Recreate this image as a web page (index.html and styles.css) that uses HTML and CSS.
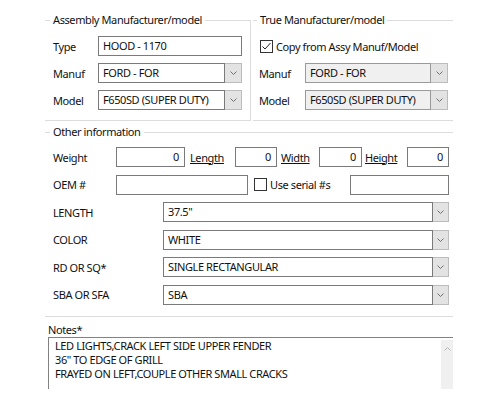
FILE: index.html
```html
<!DOCTYPE html>
<html>
<head>
<meta charset="utf-8">
<link rel="stylesheet" href="styles.css">
</head>
<body>
<div class="form">
  <div class="top">
    <fieldset class="grp grp-assy">
      <legend>Assembly Manufacturer/model</legend>
      <div class="rows">
        <div class="row"><span class="lbl">Type</span><div class="field w-top">HOOD - 1170</div></div>
        <div class="row"><span class="lbl">Manuf</span>
          <div class="combo w-top"><div class="val">FORD - FOR</div><div class="btn"><svg width="7" height="4" viewBox="0 0 7 4"><path d="M0.5 0.5 L3.5 3.5 L6.5 0.5" fill="none" stroke="#707070" stroke-width="1"/></svg></div></div>
        </div>
        <div class="row"><span class="lbl">Model</span>
          <div class="combo w-top"><div class="val">F650SD (SUPER DUTY)</div><div class="btn"><svg width="7" height="4" viewBox="0 0 7 4"><path d="M0.5 0.5 L3.5 3.5 L6.5 0.5" fill="none" stroke="#707070" stroke-width="1"/></svg></div></div>
        </div>
      </div>
    </fieldset>
    <fieldset class="grp grp-true">
      <legend>True Manufacturer/model</legend>
      <div class="rows">
        <div class="row"><span class="chk"><svg width="11" height="11" viewBox="0 0 11 11"><path d="M1.5 5.5 L4 8 L9.5 2" fill="none" stroke="#222" stroke-width="1"/></svg></span><span class="chk-text">Copy from Assy Manuf/Model</span></div>
        <div class="row"><span class="lbl lbl-r">Manuf</span>
          <div class="combo disabled w-topr"><div class="val">FORD - FOR</div><div class="btn"><svg width="7" height="4" viewBox="0 0 7 4"><path d="M0.5 0.5 L3.5 3.5 L6.5 0.5" fill="none" stroke="#707070" stroke-width="1"/></svg></div></div>
        </div>
        <div class="row"><span class="lbl lbl-r">Model</span>
          <div class="combo disabled w-topr"><div class="val">F650SD (SUPER DUTY)</div><div class="btn"><svg width="7" height="4" viewBox="0 0 7 4"><path d="M0.5 0.5 L3.5 3.5 L6.5 0.5" fill="none" stroke="#707070" stroke-width="1"/></svg></div></div>
        </div>
      </div>
    </fieldset>
  </div>

  <fieldset class="grp grp-other">
    <legend>Other information</legend>
    <div class="rows rows-other">
      <div class="row">
        <span class="lbl lbl-o">Weight</span>
        <div class="field num w-weight">0</div>
        <span class="link l-length">Length</span>
        <div class="field num w-dim">0</div>
        <span class="link l-width">Width</span>
        <div class="field num w-dim2">0</div>
        <span class="link l-height">Height</span>
        <div class="field num w-dim">0</div>
      </div>
      <div class="row">
        <span class="lbl lbl-o">OEM #</span>
        <div class="field w-oem"></div>
        <span class="chk chk-empty"></span><span class="chk-text">Use serial #s</span>
        <div class="field w-serial"></div>
      </div>
      <div class="row">
        <span class="lbl lbl-wide">LENGTH</span>
        <div class="combo w-long"><div class="val">37.5"</div><div class="btn btn-s"><svg width="7" height="4" viewBox="0 0 7 4"><path d="M0.5 0.5 L3.5 3.5 L6.5 0.5" fill="none" stroke="#707070" stroke-width="1"/></svg></div></div>
      </div>
      <div class="row">
        <span class="lbl lbl-wide">COLOR</span>
        <div class="combo w-long"><div class="val">WHITE</div><div class="btn btn-s"><svg width="7" height="4" viewBox="0 0 7 4"><path d="M0.5 0.5 L3.5 3.5 L6.5 0.5" fill="none" stroke="#707070" stroke-width="1"/></svg></div></div>
      </div>
      <div class="row">
        <span class="lbl lbl-wide">RD OR SQ*</span>
        <div class="combo w-long"><div class="val">SINGLE RECTANGULAR</div><div class="btn btn-s"><svg width="7" height="4" viewBox="0 0 7 4"><path d="M0.5 0.5 L3.5 3.5 L6.5 0.5" fill="none" stroke="#707070" stroke-width="1"/></svg></div></div>
      </div>
      <div class="row">
        <span class="lbl lbl-wide">SBA OR SFA</span>
        <div class="combo w-long"><div class="val">SBA</div><div class="btn btn-s"><svg width="7" height="4" viewBox="0 0 7 4"><path d="M0.5 0.5 L3.5 3.5 L6.5 0.5" fill="none" stroke="#707070" stroke-width="1"/></svg></div></div>
      </div>
    </div>
  </fieldset>

  <div class="notes-label">Notes*</div>
  <div class="notes">
    <div class="notes-text">LED LIGHTS,CRACK LEFT SIDE UPPER FENDER<br>36" TO EDGE OF GRILL<br>FRAYED ON LEFT,COUPLE OTHER SMALL CRACKS</div>
    <div class="scroll"><svg width="7" height="4" viewBox="0 0 7 4"><path d="M0.5 3.5 L3.5 0.5 L6.5 3.5" fill="none" stroke="#b8b8b8" stroke-width="1"/></svg></div>
  </div>
</div>
</body>
</html>
```

FILE: styles.css
```css
* { box-sizing: border-box; }
html, body { margin: 0; background: #fff; }
body {
  font-family: "Noto Sans", "Open Sans", sans-serif;
  font-size: 11px;
  letter-spacing: -0.4px;
  color: #111;
}
.form {
  padding: 13px 0 0 45px;
  width: 453px;
}
.top { display: flex; }

.grp {
  margin: 0;
  min-width: 0;
  border: 1px solid #dcdcdc;
  border-left: none;
  border-right: none;
  padding: 9px 8px 10px 8px;
}
.grp legend {
  padding: 0 3px;
  margin-left: -3px;
  line-height: 14px;
}
.grp-assy {
  width: 206px;
  border-right: 1px solid #dcdcdc;
}
.grp-true {
  width: 200px;
  margin-left: 2px;
  padding-left: 6px;
  padding-right: 5px;
}
.grp-true legend { margin-left: -2px; }

.rows { display: flex; flex-direction: column; gap: 7px; }
.row { display: flex; align-items: center; height: 20px; white-space: nowrap; }
.lbl { flex: none; width: 45px; }
.lbl-r { width: 46px; }

.field {
  flex: none;
  height: 20px;
  border: 1px solid #7a7a7a;
  background: #fff;
  padding: 0 4px;
  line-height: 18px;
  overflow: hidden;
}
.num { text-align: right; padding-right: 5px; }

.combo { flex: none; display: flex; height: 20px; }
.combo .val {
  flex: 1;
  min-width: 0;
  border: 1px solid #7a7a7a;
  background: #fff;
  padding: 0 4px;
  line-height: 18px;
  overflow: hidden;
}
.combo .btn {
  flex: none;
  width: 17px;
  background: #e3e3e3;
  border: 1px solid #bcbcbc;
  border-left: none;
  display: flex;
  align-items: center;
  justify-content: center;
}
.combo .btn-s { width: 16px; }
.combo.disabled .val { background: #f0f0f0; border-color: #9a9a9a; }

.w-top { width: 144px; }
.w-topr { width: 143px; }

.chk {
  flex: none;
  width: 13px;
  height: 13px;
  border: 1px solid #333;
  background: #fff;
  display: flex;
  align-items: center;
  justify-content: center;
  margin-left: 1px;
}
.chk-text { margin-left: 3px; }

.grp-other {
  width: 408px;
  margin-top: 4px;
  padding: 8px 4px 11px 8px;
}
.rows-other { gap: 7.6px; }
.lbl-o { width: 63px; }
.lbl-wide { flex: none; width: 110px; }
.link { flex: none; text-decoration: underline; }
.w-weight { width: 69px; }
.l-length { width: 50px; padding-left: 5px; }
.w-dim { width: 42px; }
.l-width { width: 42px; padding-left: 4px; }
.w-dim2 { width: 43px; }
.l-height { width: 45px; padding-left: 3px; }
.w-oem { width: 132px; }
.chk-empty { margin-left: 6px; }
.w-serial { width: 99px; margin-left: auto; }
.w-long { width: 286px; }

.notes-label {
  margin: 6px 0 0 3px;
  line-height: 14px;
}
.notes {
  margin-left: 3px;
  width: 405px;
  height: 52px;
  display: flex;
  border-top: 1px solid #828282;
  border-left: 1px solid #828282;
}
.notes-text {
  flex: 1;
  padding: 1px 0 0 6px;
  line-height: 14px;
  white-space: nowrap;
  overflow: hidden;
}
.scroll {
  flex: none;
  width: 12px;
  margin-top: 2px;
  background: #f0f0f0;
  display: flex;
  justify-content: center;
  align-items: flex-start;
  padding-top: 7px;
}
```
